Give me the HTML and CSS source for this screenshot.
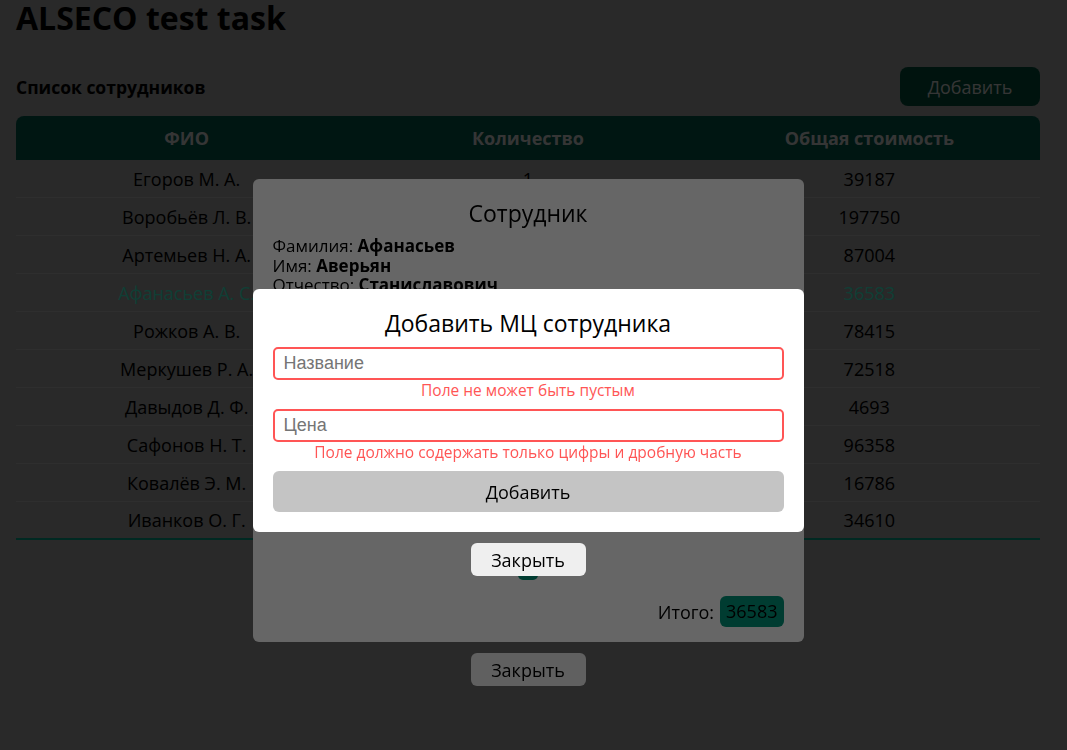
FILE: index.html
```html
<!DOCTYPE html>
<html lang="ru">
<head>
<meta charset="utf-8">
<title>ALSECO test task</title>
<link rel="stylesheet" href="styles.css">
</head>
<body>
<div class="page">
  <h1 class="title">ALSECO test task</h1>
  <div class="toolbar">
    <h2 class="subtitle">Список сотрудников</h2>
    <button class="btn-primary">Добавить</button>
  </div>
  <table class="table">
    <thead>
      <tr><th>ФИО</th><th>Количество</th><th>Общая стоимость</th></tr>
    </thead>
    <tbody>
      <tr><td>Егоров М. А.</td><td>1</td><td>39187</td></tr>
      <tr><td>Воробьёв Л. В.</td><td>4</td><td>197750</td></tr>
      <tr><td>Артемьев Н. А.</td><td>2</td><td>87004</td></tr>
      <tr class="selected"><td>Афанасьев А. С.</td><td>1</td><td>36583</td></tr>
      <tr><td>Рожков А. В.</td><td>2</td><td>78415</td></tr>
      <tr><td>Меркушев Р. А.</td><td>2</td><td>72518</td></tr>
      <tr><td>Давыдов Д. Ф.</td><td>1</td><td>4693</td></tr>
      <tr><td>Сафонов Н. Т.</td><td>3</td><td>96358</td></tr>
      <tr><td>Ковалёв Э. М.</td><td>1</td><td>16786</td></tr>
      <tr><td>Иванков О. Г.</td><td>2</td><td>34610</td></tr>
    </tbody>
  </table>
</div>

<div class="overlay overlay-first">
  <div class="modal modal-employee">
    <h3 class="modal-title">Сотрудник</h3>
    <div class="info">
      <div>Фамилия: <b>Афанасьев</b></div>
      <div>Имя: <b>Аверьян</b></div>
      <div>Отчество: <b>Станиславович</b></div>
    </div>
    <div class="items">
      <div class="item"><span>Монитор</span><span>36583</span></div>
    </div>
    <button class="btn-add-small">+</button>
    <div class="total">Итого: <span class="badge">36583</span></div>
  </div>
  <button class="btn-close">Закрыть</button>
</div>

<div class="overlay overlay-second">
  <div class="modal modal-form">
    <h3 class="modal-title">Добавить МЦ сотрудника</h3>
    <input class="field" type="text" placeholder="Название">
    <div class="error">Поле не может быть пустым</div>
    <input class="field" type="text" placeholder="Цена">
    <div class="error">Поле должно содержать только цифры и дробную часть</div>
    <button class="btn-submit">Добавить</button>
  </div>
  <button class="btn-close">Закрыть</button>
</div>
</body>
</html>
```

FILE: styles.css
```css
* { box-sizing: border-box; }

body {
  margin: 0;
  background: #929292;
  font-family: "Open Sans", sans-serif;
  color: #000;
}

.page {
  padding: 0 27px 0 16px;
}

.title {
  margin: 0;
  font-size: 32px;
  line-height: 36px;
  font-weight: 700;
}

.toolbar {
  display: flex;
  justify-content: space-between;
  align-items: center;
  margin-top: 31px;
}

.subtitle {
  margin: 0;
  font-size: 17.5px;
  font-weight: 700;
}

.btn-primary {
  width: 140px;
  height: 39px;
  border: none;
  border-radius: 8px;
  background: #044736;
  color: #c1c1c1;
  font-family: inherit;
  font-size: 18px;
}

.table {
  width: 100%;
  margin-top: 10px;
  border-collapse: separate;
  border-spacing: 0;
  table-layout: fixed;
  font-size: 18px;
}

.table th {
  height: 44px;
  background: #044f44;
  color: #c1c1c1;
  font-size: 18px;
  font-weight: 700;
}

.table th:first-child { border-top-left-radius: 8px; }
.table th:last-child { border-top-right-radius: 8px; }

.table td {
  height: 38px;
  text-align: center;
  border-bottom: 1px solid #a6a6a6;
}

.table tbody tr:last-child td {
  border-bottom: 2px solid #00967a;
}

.table .selected td { color: #3ae0c0; }

.overlay {
  position: fixed;
  inset: 0;
  display: flex;
  flex-direction: column;
  align-items: center;
  justify-content: center;
  gap: 11px;
  padding: 115px 27px 0 16px;
}

.overlay-first { background: rgba(0, 0, 0, 0.3); }
.overlay-second { background: rgba(0, 0, 0, 0.6); }

.modal {
  width: 551px;
  background: #fff;
  border-radius: 6px;
  display: flex;
  flex-direction: column;
}

.modal-employee {
  height: 463px;
  padding: 20px 20px 15px;
}

.modal-form {
  padding: 20px;
}

.modal-title {
  margin: 0;
  text-align: center;
  font-size: 23px;
  line-height: 28px;
  font-weight: 400;
}

.info {
  margin-top: 9px;
  font-size: 17px;
  line-height: 19.5px;
}

.items {
  flex: 1;
  padding-top: 10px;
}

.item {
  display: flex;
  justify-content: space-between;
}

.btn-add-small {
  align-self: center;
  width: 20px;
  height: 28px;
  padding: 0;
  border: none;
  border-radius: 5px;
  background: #00967a;
  color: #fff;
  margin-bottom: 16px;
}

.total {
  display: flex;
  justify-content: flex-end;
  align-items: center;
  gap: 6px;
  font-size: 18px;
}

.badge {
  height: 31px;
  line-height: 31px;
  padding: 0 6px;
  border-radius: 6px;
  background: #00967a;
}

.field {
  display: block;
  width: 100%;
  height: 33px;
  margin-top: 10px;
  padding: 0 9px;
  border: 2px solid #ff5555;
  border-radius: 5px;
  font-family: "Liberation Sans", Arial, sans-serif;
  font-size: 18px;
  outline: none;
}

.field::placeholder { color: #757575; }

.error {
  text-align: center;
  color: #ff5555;
  font-size: 15.5px;
  line-height: 20px;
}

.error + .field { margin-top: 9px; }

.btn-submit {
  height: 41px;
  margin-top: 9px;
  border: none;
  border-radius: 6px;
  background: #c4c4c4;
  font-family: inherit;
  font-size: 18px;
  color: #000;
}

.btn-close {
  width: 115px;
  height: 33px;
  border: none;
  border-radius: 6px;
  background: #efefef;
  font-family: inherit;
  font-size: 18px;
  color: #000;
}
```
